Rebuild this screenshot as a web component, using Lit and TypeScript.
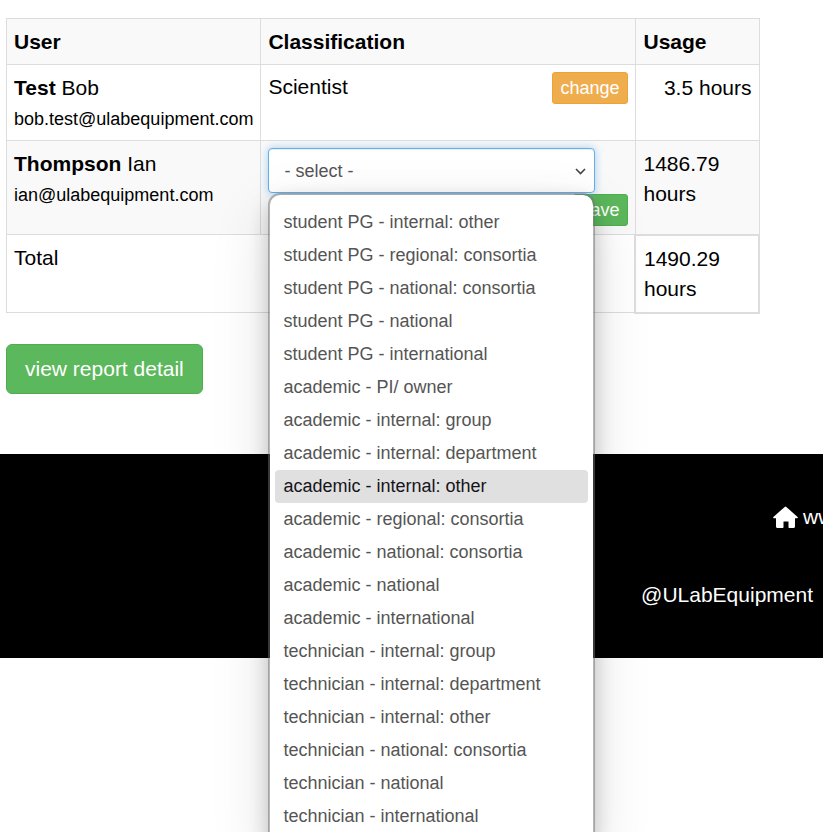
import { LitElement, css, html } from 'lit';
import { customElement, state } from 'lit/decorators.js';
import { classMap } from 'lit/directives/class-map.js';

const CLASSIFICATIONS = [
   'student PG - internal: other',
   'student PG - regional: consortia',
   'student PG - national: consortia',
   'student PG - national',
   'student PG - international',
   'academic - PI/ owner',
   'academic - internal: group',
   'academic - internal: department',
   'academic - internal: other',
   'academic - regional: consortia',
   'academic - national: consortia',
   'academic - national',
   'academic - international',
   'technician - internal: group',
   'technician - internal: department',
   'technician - internal: other',
   'technician - national: consortia',
   'technician - national',
   'technician - international',
];

@customElement('classification-select')
export class ClassificationSelect extends LitElement {
   @state() private _active = 8;
   @state() private _value = '';
   @state() private _open = true;

   static get styles() {
      return css`
         :host {
            display: block;
            position: relative;
            width: 91%;
            font-size: 18px;
            color: #555;
         }

         .field {
            display: block;
            box-sizing: border-box;
            width: 100%;
            height: 45px;
            padding: 0 32px 0 15px;
            appearance: none;
            font: inherit;
            color: inherit;
            background: #fff;
            border: 1px solid #66afe9;
            border-radius: 4px;
            outline: 0;
            box-shadow:
               inset 0 1px 1px rgba(0, 0, 0, 0.075),
               0 0 8px rgba(102, 175, 233, 0.6);
         }

         .chevron {
            position: absolute;
            right: 9px;
            top: 18px;
            width: 11px;
            height: 11px;
            pointer-events: none;
         }

         .menu {
            position: absolute;
            z-index: 10;
            top: 100%;
            left: 0;
            right: 0;
            margin: 0;
            padding: 11px 5px;
            list-style: none;
            background: #fff;
            background-clip: padding-box;
            border: 2px solid rgba(112, 112, 112, 0.5);
            border-radius: 12px;
            box-shadow:
               0 8px 20px rgba(0, 0, 0, 0.2),
               0 20px 60px rgba(0, 0, 0, 0.12);
         }

         .option {
            padding: 0 8px;
            line-height: 33px;
            white-space: nowrap;
            border-radius: 4px;
            cursor: default;
         }

         .option.active {
            color: #15141a;
            background: #e0e0e0;
         }
      `;
   }

   render() {
      return html`
         <select
            class="field"
            aria-label="Classification"
            .value=${this._value}
            @mousedown=${this._toggle}
         >
            <option value="">- select -</option>
            ${CLASSIFICATIONS.map(
               (c) => html`<option value=${c} ?selected=${c === this._value}>${c}</option>`
            )}
         </select>
         <svg class="chevron" viewBox="0 0 11 11" aria-hidden="true">
            <path d="M1 3l4.500 4.500L10 3" fill="none" stroke="#444" stroke-width="1.600" />
         </svg>
         ${this._open
            ? html`<ul class="menu" role="listbox" aria-label="Classification">
                 ${CLASSIFICATIONS.map(
                    (c, i) => html`<li
                       class=${classMap({ option: true, active: i === this._active })}
                       role="option"
                       aria-selected=${i === this._active}
                       @mouseenter=${() => (this._active = i)}
                       @click=${() => this._pick(c)}
                    >
                       ${c}
                    </li>`
                 )}
              </ul>`
            : ''}
      `;
   }

   _toggle(e: Event) {
      e.preventDefault();
      this._open = !this._open;
   }

   _pick(c: string) {
      this._value = c;
      this._open = false;
   }
}

@customElement('app-root')
export class AppRoot extends LitElement {
   static get styles() {
      return css`
         :host {
            display: block;
            position: relative;
            height: 100vh;
            overflow: hidden;
            background: #fff;
            color: #000;
            font-family: 'Liberation Sans', Arial, sans-serif;
            font-size: 21px;
            line-height: 30px;
         }

         main {
            padding: 18px 63px 60px 6px;
         }

         table {
            width: 100%;
            border-collapse: collapse;
            margin-bottom: 30px;
         }

         th,
         td {
            padding: 8px 7px 7px;
            border: 1px solid #ddd;
            text-align: left;
            vertical-align: top;
         }

         td.control {
            padding: 7px 7px 8px;
         }

         .user {
            width: 1%;
            white-space: nowrap;
         }

         .usage {
            width: 107px;
            padding-left: 8px;
         }

         .right {
            text-align: right;
         }

         .striped {
            background: #f9f9f9;
         }

         .sum {
            border-width: 2px;
            padding-bottom: 8px;
         }

         .email {
            font-size: 18px;
            line-height: 24px;
         }

         .current {
            display: flex;
            justify-content: space-between;
            align-items: flex-start;
         }

         .edit {
            display: flex;
            flex-direction: column;
            gap: 1px;
         }

         button {
            font-family: inherit;
            color: #fff;
            cursor: pointer;
         }

         .small {
            height: 32px;
            padding: 0 7px;
            font-size: 18px;
            border-radius: 3px;
         }

         .large {
            display: block;
            height: 50px;
            padding: 0 18px;
            font-size: 21px;
            border-radius: 6px;
         }

         .warning {
            background: #f0ad4e;
            border: 1px solid #eea236;
         }

         .success {
            background: #5cb85c;
            border: 1px solid #4cae4c;
         }

         .save {
            align-self: flex-end;
         }

         footer {
            display: flex;
            flex-direction: column;
            align-items: flex-end;
            gap: 48px;
            padding: 48px 0;
            background: #000;
         }

         footer a {
            color: #fff;
            text-decoration: none;
         }

         .home {
            display: flex;
            align-items: center;
            gap: 5px;
            width: 50px;
            white-space: nowrap;
         }

         .home svg {
            flex: none;
            width: 25px;
            height: 22px;
         }

         .handle {
            padding-right: 10px;
         }
      `;
   }

   render() {
      return html`
         <main>
            <table>
               <thead>
                  <tr class="striped">
                     <th class="user">User</th>
                     <th>Classification</th>
                     <th class="usage">Usage</th>
                  </tr>
               </thead>
               <tbody>
                  <tr>
                     <td class="user">
                        <b>Test</b> Bob<br />
                        <span class="email">bob.test@ulabequipment.com</span>
                     </td>
                     <td class="control">
                        <div class="current">
                           Scientist
                           <button class="small warning">change</button>
                        </div>
                     </td>
                     <td class="usage right">3.5 hours</td>
                  </tr>
                  <tr class="striped">
                     <td class="user">
                        <b>Thompson</b> Ian<br />
                        <span class="email">ian@ulabequipment.com</span>
                     </td>
                     <td class="control">
                        <div class="edit">
                           <classification-select></classification-select>
                           <button class="small success save">save</button>
                        </div>
                     </td>
                     <td class="usage">1486.79 hours</td>
                  </tr>
                  <tr>
                     <td colspan="2">Total</td>
                     <td class="usage sum">1490.29 hours</td>
                  </tr>
               </tbody>
            </table>
            <button class="large success">view report detail</button>
         </main>
         <footer>
            <a class="home" href="#">
               <svg viewBox="0 0 25 22" fill="#fff" aria-hidden="true">
                  <path
                     d="M11.700 0.900q.8-.7 1.600 0L24.600 11c.6.600.2 1.300-.6 1.300H22v8.200c0 .9-.6 1.500-1.500 1.500H16.500c-.6 0-1-.4-1-1v-5.500h-5V21c0 .6-.4 1-1 1H4.500C3.600 22 3 21.400 3 20.500v-8.200H1c-.8 0-1.200-.7-.6-1.300z"
                  />
               </svg>
               <span>www</span>
            </a>
            <a class="handle" href="#">@ULabEquipment</a>
         </footer>
      `;
   }
}
